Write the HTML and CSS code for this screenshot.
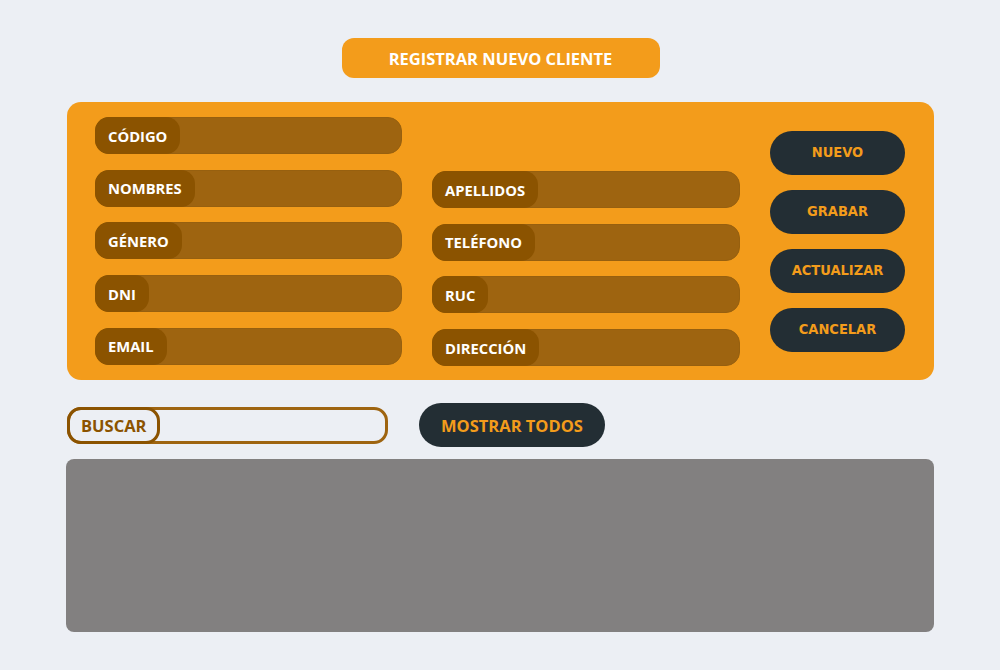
FILE: index.html
```html
<!DOCTYPE html>
<html lang="es">
<head>
<meta charset="utf-8">
<title>Registrar nuevo cliente</title>
<link rel="stylesheet" href="styles.css">
</head>
<body>
<div class="page">
  <div class="title-row">
    <div class="title">REGISTRAR NUEVO CLIENTE</div>
  </div>
  <div class="panel">
    <div class="col">
      <div class="field"><span class="lbl">CÓDIGO</span></div>
      <div class="field"><span class="lbl">NOMBRES</span></div>
      <div class="field"><span class="lbl">GÉNERO</span></div>
      <div class="field"><span class="lbl">DNI</span></div>
      <div class="field"><span class="lbl">EMAIL</span></div>
    </div>
    <div class="col col2">
      <div class="field"><span class="lbl">APELLIDOS</span></div>
      <div class="field"><span class="lbl">TELÉFONO</span></div>
      <div class="field"><span class="lbl">RUC</span></div>
      <div class="field"><span class="lbl">DIRECCIÓN</span></div>
    </div>
    <div class="actions">
      <button class="btn">NUEVO</button>
      <button class="btn">GRABAR</button>
      <button class="btn">ACTUALIZAR</button>
      <button class="btn">CANCELAR</button>
    </div>
  </div>
  <div class="search-row">
    <div class="search"><span class="search-lbl">BUSCAR</span></div>
    <button class="show-all">MOSTRAR TODOS</button>
  </div>
  <div class="results"></div>
</div>
</body>
</html>
```
FILE: styles.css
```css
* { box-sizing: border-box; }
html, body { margin: 0; padding: 0; }
body {
  background: #eceff4;
  font-family: "Open Sans", "Liberation Sans", sans-serif;
  width: 1000px;
  height: 670px;
  overflow: hidden;
}
.page {
  padding: 38px 66px 0 66px;
}
.title-row {
  display: flex;
  justify-content: center;
}
.title {
  width: 318px;
  height: 40px;
  margin-left: 1px;
  background: #f39c1b;
  border-radius: 12px;
  color: #fff;
  font-weight: 700;
  font-size: 16.5px;
  display: flex;
  align-items: center;
  justify-content: center;
}
.panel {
  margin: 24px 0 0 1px;
  width: 867px;
  height: 278px;
  background: #f39c1b;
  border-radius: 14px;
  padding: 15px 29px 0 28px;
  display: grid;
  grid-template-columns: 307px 308px 135px;
  column-gap: 30px;
}
.col {
  display: flex;
  flex-direction: column;
  gap: 15.7px;
}
.col2 { padding-top: 54px; }
.field {
  height: 37px;
  border-radius: 14px;
  background: #9e6410;
  border: 1px solid #97600f;
  display: flex;
}
.lbl {
  background: #8b5300;
  border-radius: 14px;
  margin: -1px 0 -1px -1px;
  padding: 0 13px;
  color: #fff;
  font-weight: 700;
  font-size: 14.75px;
  display: flex;
  align-items: center;
}
.actions {
  display: flex;
  flex-direction: column;
  justify-content: center;
  gap: 15px;
  padding-bottom: 15px;
}
.btn {
  height: 44px;
  width: 135px;
  border: none;
  border-radius: 22px;
  background: #232e34;
  color: #f39c1b;
  font-family: "DejaVu Sans Condensed", "DejaVu Sans", sans-serif;
  font-stretch: condensed;
  font-weight: 700;
  font-size: 14.5px;
  padding: 0 0 1px 0;
}
.search-row {
  margin-top: 23px;
  display: flex;
  align-items: center;
  gap: 31px;
  padding-left: 1px;
}
.search {
  width: 321px;
  height: 37px;
  border: 3px solid #9e6410;
  border-radius: 14px;
  display: flex;
}
.search-lbl {
  margin: -3px 0 -3px -3px;
  border: 3px solid #8b5300;
  border-radius: 14px;
  padding: 0 11px;
  color: #8b5300;
  font-weight: 700;
  font-size: 16.5px;
  display: flex;
  align-items: center;
}
.show-all {
  width: 186px;
  height: 44px;
  border: none;
  border-radius: 22px;
  background: #232e34;
  color: #f39c1b;
  font-family: "Open Sans", sans-serif;
  font-weight: 700;
  font-size: 16.5px;
  padding: 0;
}
.results {
  margin-top: 12px;
  width: 868px;
  height: 173px;
  background: #828080;
  border-radius: 8px;
}
```
